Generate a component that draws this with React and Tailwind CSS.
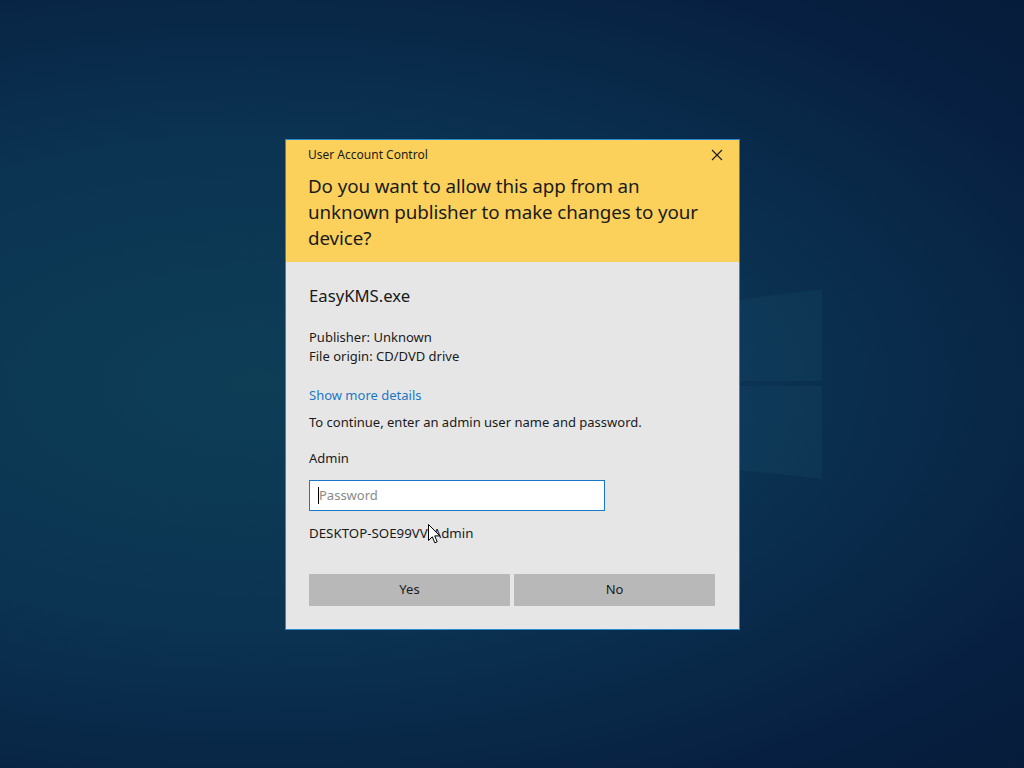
import React from 'react';

function Cursor() {
  return (
    <svg className="absolute left-[428px] top-[524px] z-20" width="13" height="20" viewBox="0 0 13 20">
      <path d="M0.5 0.5 L0.5 16.5 L4.3 12.8 L6.8 18.8 L9.2 17.8 L6.7 11.9 L11.8 11.9 Z" fill="#fff" stroke="#000" strokeWidth="1" strokeLinejoin="round" />
    </svg>
  );
}

function WindowsLogo() {
  return (
    <svg className="absolute inset-0" width="1024" height="768" viewBox="0 0 1024 768">
      <polygon points="600,318 822,289 822,381 600,381" fill="#2a6a80" fillOpacity="0.12" />
      <polygon points="600,386 822,386 822,479 600,455" fill="#2a6a80" fillOpacity="0.12" />
    </svg>
  );
}

export default function App() {
  return (
    <div className="relative h-[768px] w-[1024px] overflow-hidden bg-[radial-gradient(ellipse_at_25%_50%,#0d3e56_0%,#0b3352_45%,#071f40_85%,#061c3a_100%)] font-['Noto_Sans','Open_Sans',sans-serif]">
      <WindowsLogo />
      <div className="relative z-10 pl-[285px] pt-[139px]">
        <div className="w-[455px] border border-[#2a8ad0] bg-[#e6e6e6]">
          <div className="bg-[#fcd15b] pb-[11px] pl-[22px] pr-[22px] pt-[7px] text-[#1a1a1a]">
            <div className="flex items-center justify-between">
              <span className="text-[12px] leading-[16px]">User Account Control</span>
              <svg width="12" height="12" viewBox="0 0 12 12" className="mr-[-6px]">
                <path d="M1 1 L11 11 M11 1 L1 11" stroke="#1a1a1a" strokeWidth="1.1" />
              </svg>
            </div>
            <div className="mt-[10px] text-[18.8px] leading-[26px] tracking-[-0.1px]">
              Do you want to allow this app from an unknown publisher to make changes to your device?
            </div>
          </div>
          <div className="flex flex-col pb-[23px] pl-[23px] pr-[24px] pt-[22px] text-[#1a1a1a]">
            <div className="text-[16.7px] leading-[24px]">EasyKMS.exe</div>
            <div className="mt-[20px] text-[13px] leading-[19px]">
              <div>Publisher: Unknown</div>
              <div>File origin: CD/DVD drive</div>
            </div>
            <div className="mt-[20px] text-[13px] leading-[19px] text-[#1b78c8]">Show more details</div>
            <div className="mt-[8px] text-[13px] leading-[19px]">To continue, enter an admin user name and password.</div>
            <div className="mt-[17px] text-[13px] leading-[19px]">Admin</div>
            <div className="mt-[12px] flex h-[31px] w-[296px] items-center border border-[#1a76c8] bg-white pl-[8px]">
              <span className="h-[17px] w-px bg-black" />
              <span className="text-[13px] text-[#8a8a8a]">Password</span>
            </div>
            <div className="mt-[13px] text-[13.3px] leading-[19px]">DESKTOP-SOE99VV\Admin</div>
            <div className="mt-[31px] flex gap-[4px]">
              <button className="h-[32px] flex-1 bg-[#b8b8b8] text-[13px] text-[#1a1a1a]">Yes</button>
              <button className="h-[32px] flex-1 bg-[#b8b8b8] text-[13px] text-[#1a1a1a]">No</button>
            </div>
          </div>
        </div>
      </div>
      <Cursor />
    </div>
  );
}
